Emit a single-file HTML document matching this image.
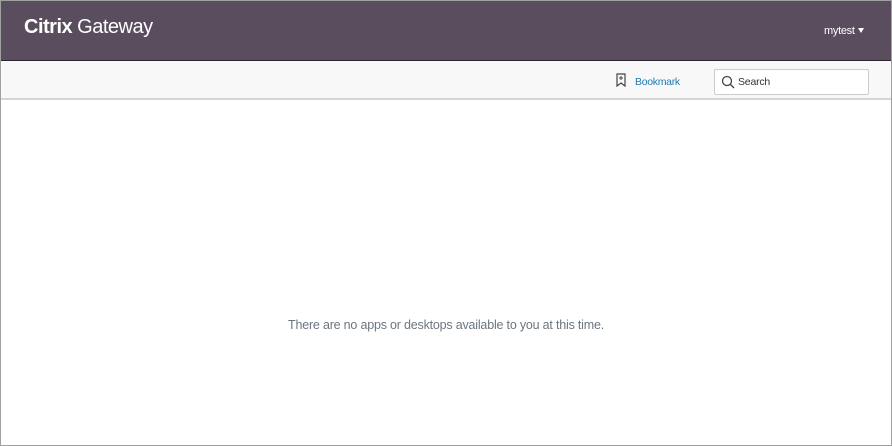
<!DOCTYPE html>
<html><head><style>
html,body{margin:0;padding:0;}
body{width:892px;height:446px;position:relative;overflow:hidden;font-family:"Liberation Sans",sans-serif;background:#fff;}
.frame{position:absolute;left:0;top:0;width:890px;height:444px;border:1px solid #a0a0a0;}
.hdr{position:absolute;left:1px;top:1px;width:890px;height:59px;background:#5a4e5e;border-bottom:1px solid #2e2632;}
.logo{position:absolute;left:24px;top:16px;color:#fff;font-size:20px;letter-spacing:-0.5px;}
.user{position:absolute;left:824px;top:25px;color:#fff;font-size:11px;letter-spacing:-0.3px;}
.tri{position:absolute;left:858px;top:28px;width:0;height:0;border-left:3.5px solid transparent;border-right:3.5px solid transparent;border-top:5px solid #fff;}
.bar{position:absolute;left:1px;top:61px;width:890px;height:37px;background:#f8f8f8;border-bottom:2px solid #d4d4d4;}
.bm{position:absolute;left:635px;top:76px;color:#1f7bb5;font-size:10.5px;letter-spacing:-0.3px;}
.search{position:absolute;left:714px;top:69px;width:153px;height:24px;border:1px solid #ccc;background:#fff;border-radius:2px;}
.search span{position:absolute;left:23px;top:6px;font-size:10.5px;color:#333;letter-spacing:-0.2px;}
.msg{position:absolute;left:0;width:892px;top:318px;text-align:center;color:#6b7680;font-size:12.5px;letter-spacing:-0.2px;}
</style></head><body>
<div class="frame"></div>
<div class="hdr"></div>
<div class="logo"><b>Citrix</b> Gateway</div>
<div class="user">mytest</div><div class="tri"></div>
<div class="bar"></div>
<svg style="position:absolute;left:615px;top:73px" width="12" height="14" viewBox="0 0 12 14"><path d="M2 1h8v12l-4-3-4 3z" fill="none" stroke="#444" stroke-width="1.2"/><path d="M6 3v4M4 5h4" stroke="#444" stroke-width="1"/></svg>
<div class="bm">Bookmark</div>
<div class="search"><svg style="position:absolute;left:6px;top:5px" width="14" height="14" viewBox="0 0 14 14"><circle cx="6" cy="6" r="4.5" fill="none" stroke="#444" stroke-width="1.3"/><path d="M9.3 9.3L13 13" stroke="#444" stroke-width="1.4"/></svg><span>Search</span></div>
<div class="msg">There are no apps or desktops available to you at this time.</div>
</body></html>
